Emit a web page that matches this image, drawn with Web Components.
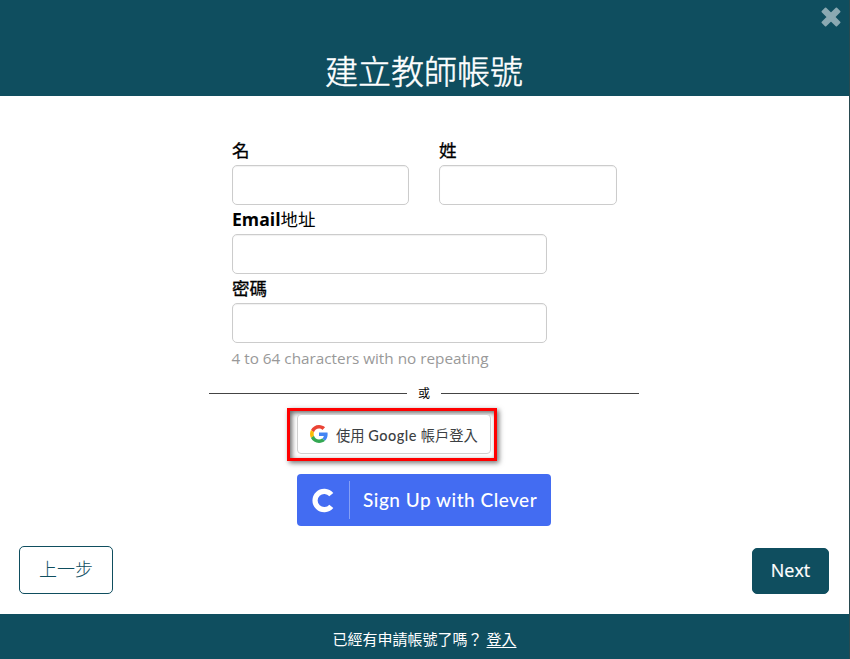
<!DOCTYPE html>
<html lang="zh-Hant"><head><meta charset="utf-8"><title>建立教師帳號</title>
<style>html,body{margin:0;height:100%;overflow:hidden;background:#fff}</style></head>
<body><signup-page></signup-page>
<script>
const define=(name,html)=>{
  const t=document.createElement('template');t.innerHTML=html;
  customElements.define(name,class extends HTMLElement{
    constructor(){super();this.attachShadow({mode:'open'}).append(t.content.cloneNode(true));}
  });
};
define('page-header',`<style>
:host{display:flex;position:relative;height:96px;box-sizing:border-box;padding-top:48px;justify-content:center;background:#0f4e5f;color:#fff}
h1{margin:0 1px 0 0;font-size:33px;line-height:48px;font-weight:300;-webkit-text-stroke:.5px #fff;white-space:nowrap}
button{position:absolute;right:8px;top:7px;width:20px;height:20px;padding:0;border:0;background:none;display:block}
svg{display:block}
</style><h1><slot></slot></h1><button aria-label="關閉"><svg width="20" height="20" viewBox="0 0 20 20"><path d="M4.6 1.4L10 6.6L15.4 1.4L18.6 4.6L13.4 10L18.6 15.4L15.4 18.6L10 13.4L4.6 18.6L1.4 15.4L6.6 10L1.4 4.6Z" fill="#8ba9b2" stroke="#8ba9b2" stroke-width="1.8" stroke-linejoin="round"/></svg></button>`);
define('form-field',`<style>
:host{display:block}
label{display:block;box-sizing:border-box;height:30px;line-height:30px;font-size:17.5px;font-weight:400;color:#000;white-space:nowrap}
input{display:block;box-sizing:border-box;width:100%;height:40px;border:1px solid #ccc;border-radius:5px;background:#fff;box-shadow:inset 0 1px 1px rgba(0,0,0,.06);padding:6px 12px;outline:0}
:host(:not(.mixed)) label{-webkit-text-stroke:.3px #000}
:host(.mixed) label{padding-top:1px;line-height:29px}
</style><label><slot></slot></label><input>`);
define('or-divider',`<style>
:host{display:flex;align-items:center;gap:11px;width:430px;height:20px;font-size:12px;line-height:20px;color:#000}
i{flex:1;height:1px;background:#444}
span{padding-top:2px}
</style><i></i><span><slot></slot></span><i></i>`);
define('google-button',`<style>
:host{display:block;box-sizing:border-box;width:210px;height:53px;border:3px solid #f00;padding:3px 3px 4px 7px;box-shadow:2px 2px 5px rgba(0,0,0,.55),inset 2px 2px 5px rgba(0,0,0,.6)}
button{display:flex;align-items:center;box-sizing:border-box;width:194px;height:40px;border:1px solid #d0d0d0;border-radius:4px;background:#fff;padding:0 0 0 12px;font:inherit;font-size:14.3px;color:#3c4043;white-space:nowrap}
svg{margin-right:8px;flex:none}
</style><button><svg width="18" height="18" viewBox="0 0 48 48"><path fill="#EA4335" d="M24 9.5c3.54 0 6.71 1.22 9.21 3.6l6.85-6.85C35.9 2.38 30.47 0 24 0 14.62 0 6.51 5.38 2.56 13.22l7.98 6.19C12.43 13.72 17.74 9.5 24 9.5z"/><path fill="#4285F4" d="M46.98 24.55c0-1.57-.15-3.09-.38-4.55H24v9.02h12.94c-.58 2.96-2.26 5.48-4.78 7.18l7.73 6c4.51-4.18 7.09-10.36 7.09-17.65z"/><path fill="#FBBC05" d="M10.53 28.59A14.5 14.5 0 0 1 9.77 24c0-1.6.27-3.14.76-4.59l-7.98-6.19A23.93 23.93 0 0 0 0 24c0 3.88.92 7.54 2.56 10.78l7.97-6.19z"/><path fill="#34A853" d="M24 48c6.48 0 11.93-2.13 15.89-5.81l-7.73-6C30.01 37.64 27.24 38.49 24 38.49c-6.26 0-11.57-4.22-13.47-9.91l-7.98 6.19C6.51 42.62 14.62 48 24 48z"/></svg><span><slot></slot></span></button>`);
define('clever-button',`<style>
:host{display:block}
button{display:flex;align-items:center;width:254px;height:52px;box-sizing:border-box;border:0;border-radius:4px;background:#436cf2;color:#fff;padding:0}
svg{margin-left:13px}
i{width:1px;height:38px;margin:0 13px 0 13px;background:#849ff6}
span{font:500 19px/24px Lato,sans-serif;letter-spacing:.5px;white-space:nowrap}
</style><button><svg width="26" height="26" viewBox="0 0 26 26"><path d="M21.3 7.6A9.2 9.2 0 1 0 21.3 19.4" fill="none" stroke="#fff" stroke-width="5.2"/></svg><i></i><span><slot></slot></span></button>`);
define('nav-button',`<style>
:host{display:block}
button{display:block;box-sizing:border-box;width:94px;height:48px;border:1px solid #0f4e5f;border-radius:5px;background:#fff;color:#0f4e5f;font:inherit;font-size:18px;font-weight:300;line-height:44px;padding:0 0 2px;white-space:nowrap}
:host([primary]) button{width:77px;height:46px;background:#0f4e5f;color:#fff;font-weight:400;font-size:18px;line-height:42px;-webkit-text-stroke:.2px #fff}
</style><button><slot></slot></button>`);
define('page-footer',`<style>
:host{display:flex;height:45px;box-sizing:border-box;padding-top:3px;justify-content:center;align-items:center;gap:4px;background:#0f4e5f;color:#fff;font-size:15px;white-space:nowrap}
::slotted(a){color:#fff;text-decoration:underline;text-underline-offset:2px}
</style><slot></slot>`);
define('signup-page',`<style>
:host{display:flex;flex-direction:column;width:850px;height:659px;box-sizing:border-box;border-right:1px solid #29494f;background:#fff;font-family:"Open Sans","Noto Sans CJK TC",sans-serif}
main{flex:1;display:flex;flex-direction:column;padding-top:39px;box-sizing:border-box}
form{margin-left:232px;width:385px}
.names{display:grid;grid-template-columns:177px 178px;gap:30px}
.wide{width:315px;margin-top:-1px}
small{display:block;font-size:15.3px;line-height:20px;margin:5px 0 1px -.5px;color:#999;white-space:nowrap}
or-divider{margin:14px 0 0 209px}
google-button{margin:5px 0 0 287px}
clever-button{margin:13px 0 0 297px}
nav{display:flex;justify-content:space-between;align-items:flex-end;margin:20px 20px 20px 19px}
</style>
<page-header>建立教師帳號</page-header>
<main><form><div class="names"><form-field>名</form-field><form-field>姓</form-field></div>
<form-field class="wide mixed"><b style="font-weight:700;font-size:17.6px">Email</b>地址</form-field><form-field class="wide">密碼</form-field><small>4 to 64 characters with no repeating</small></form>
<or-divider>或</or-divider><google-button>使用 <span style="font-family:Lato;font-weight:500;font-size:14.5px;letter-spacing:.5px">Google</span> 帳戶登入</google-button><clever-button>Sign Up with Clever</clever-button>
<nav><nav-button>上一步</nav-button><nav-button primary>Next</nav-button></nav></main>
<page-footer><span>已經有申請帳號了嗎？</span><a href="#">登入</a></page-footer>`);
</script></body></html>
